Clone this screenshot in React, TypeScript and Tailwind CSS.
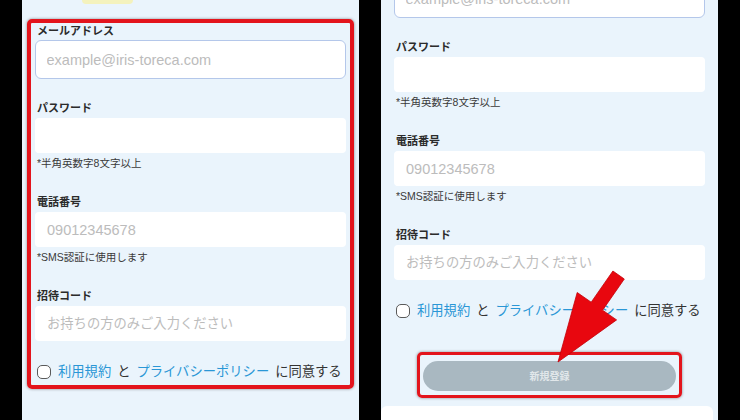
import type { ReactNode } from 'react';

const FONT = "font-['Liberation_Sans','Noto_Sans_CJK_JP',sans-serif]";

function Label({ children, className = '' }: { children: ReactNode; className?: string }) {
  return <div className={`pl-[2px] text-[11px] leading-[14px] font-bold text-[#2b2b2b] ${className}`}>{children}</div>;
}

function Note({ children }: { children: ReactNode }) {
  return <div className="mt-[3px] pl-[2px] text-[10.5px] leading-[14px] text-[#3a3a3a]">{children}</div>;
}

function Field({ placeholder = '', size = 'text-[14.5px]' }: { placeholder?: string; size?: string }) {
  return (
    <input
      readOnly
      placeholder={placeholder}
      className={`mt-[3px] block h-[35px] w-full rounded-[4px] bg-white pl-3 outline-none placeholder:text-[#bcbcbc] ${size}`}
    />
  );
}

// registration form; `boxed` draws the red callout frame around it
function SignupForm({ boxed }: { boxed: boolean }) {
  return (
    <div
      className={`mx-[5px] rounded-[5px] border-4 px-[4px] pt-px pb-[3px] ${
        boxed ? 'border-[#e3141c] shadow-[0_0_3px_rgba(0,0,0,0.45)]' : 'border-transparent'
      }`}
    >
      <Label>メールアドレス</Label>
      <input
        readOnly
        placeholder="example@iris-toreca.com"
        className="mt-[2px] block h-[39px] w-full rounded-[6px] border-[1.5px] border-[#b4c7ea] bg-white pl-[10.5px] text-[14.5px] outline-none placeholder:text-[#bcbcbc]"
      />

      <Label className="mt-[22px]">パスワード</Label>
      <Field />
      <Note>*半角英数字8文字以上</Note>

      <Label className="mt-[25px]">電話番号</Label>
      <Field placeholder="09012345678" />
      <Note>*SMS認証に使用します</Note>

      <Label className="mt-[25px]">招待コード</Label>
      <Field placeholder="お持ちの方のみご入力ください" size="text-[13.3px]" />

      <div className="mt-[21px] flex h-[20px] items-center gap-[6px] pl-[2px] text-[13.3px] text-[#333]">
        <span className="mr-px h-[14px] w-[14px] rounded-[5px] border-[1.5px] border-[#5a5a5a] bg-white" />
        <span className="text-[#2a97d6]">利用規約</span>
        <span>と</span>
        <span className="text-[#2a97d6]">プライバシーポリシー</span>
        <span>に同意する</span>
      </div>
    </div>
  );
}

export default function App() {
  return (
    <div className={`relative flex h-[420px] w-[740px] gap-[22px] overflow-hidden bg-black pl-[22px] ${FONT}`}>
      {/* left phone: form in callout */}
      <div className="h-full w-[337px] overflow-hidden bg-[#eaf4fc]">
        <div className="ml-[60px] h-[4px] w-[51px] rounded-b-full bg-[#f4f2bd]" />
        <div className="mt-[15px]">
          <SignupForm boxed />
        </div>
      </div>

      {/* right phone: scrolled down to the submit button */}
      <div className="flex h-full w-[337px] flex-col overflow-hidden bg-[#eaf4fc]">
        <div className="mt-[-42px] shrink-0">
          <SignupForm boxed={false} />
        </div>
        <div className="mt-[24px] flex shrink-0 justify-center">
          <div className="rounded-[5px] border-[3px] border-[#e3141c] px-[3px] pt-[6px] pb-[4px] shadow-[0_0_3px_rgba(0,0,0,0.45)]">
            <button className="flex h-[30px] w-[253px] items-center justify-center rounded-full bg-[#a9b8c1] text-[10px] font-bold text-[#e1e7ea]">
              新規登録
            </button>
          </div>
        </div>
        <div className="mt-[8px] mr-[5px] h-[40px] shrink-0 rounded-t-[6px] bg-white" />
      </div>

      {/* pointer arrow */}
      <svg className="pointer-events-none absolute top-0 left-0" width="740" height="420" viewBox="0 0 740 420">
        <polygon
          points="612.9,271 624.3,279 602.6,310.2 616.6,319.9 558,362 577.2,292.5 591.2,302.2"
          fill="#e8070f"
          stroke="#c40008"
          strokeWidth="0.8"
          strokeLinejoin="round"
        />
      </svg>
    </div>
  );
}
